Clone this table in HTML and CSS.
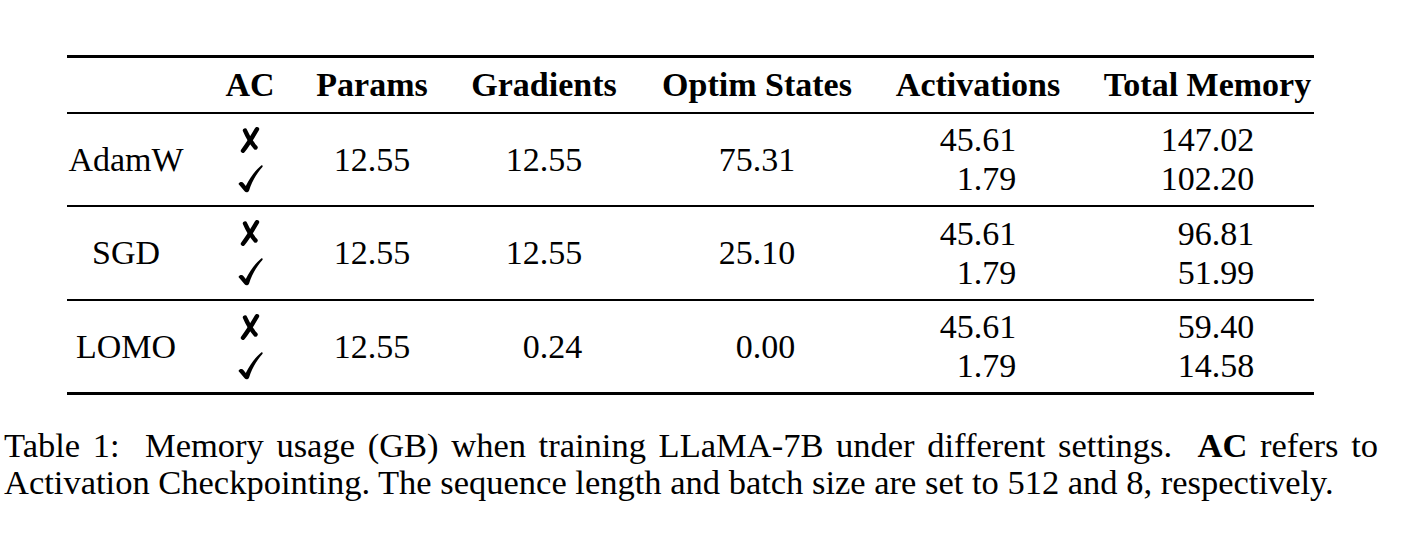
FILE: index.html
```html
<!DOCTYPE html>
<html lang="en">
<head>
<meta charset="utf-8">
<title>Table 1: Memory usage</title>
<link rel="stylesheet" href="styles.css">
</head>
<body>
<div class="page">
  <table class="mem">
    <colgroup>
      <col class="c1"><col class="c2"><col class="c3"><col class="c4"><col class="c5"><col class="c6"><col class="c7">
    </colgroup>
    <thead>
      <tr>
        <th></th><th>AC</th><th>Params</th><th>Gradients</th><th>Optim States</th><th>Activations</th><th>Total Memory</th>
      </tr>
    </thead>
    <tbody>
      <tr class="r1">
        <td>AdamW</td>
        <td><div class="stack marks">
          <svg class="xm" viewBox="0 0 22 26" width="22" height="26"><path d="M18 2.2 C14 9 9.5 16.5 4 23.8"/><path d="M6 3.5 C8.5 9.5 12 15.5 16.5 20.5"/></svg>
          <svg class="ck" viewBox="0 0 25 28" width="25" height="28"><path d="M0.5 19 C1.5 16.8 4.2 16.4 5.6 18.2 L7.8 21 C12 12.5 17 5.5 23.2 0.5 C24.3 -0.2 25.2 0.9 24.4 1.9 C18.5 8.5 14 16.5 11.2 25.2 C10.5 27.6 7.8 28 6.6 26.2 Z"/></svg>
        </div></td>
        <td><span class="n5">12.55</span></td>
        <td><span class="n5">12.55</span></td>
        <td><span class="n5">75.31</span></td>
        <td><div class="stack"><span>45.61</span><span>1.79</span></div></td>
        <td><div class="stack w6"><span>147.02</span><span>102.20</span></div></td>
      </tr>
      <tr>
        <td>SGD</td>
        <td><div class="stack marks">
          <svg class="xm" viewBox="0 0 22 26" width="22" height="26"><path d="M18 2.2 C14 9 9.5 16.5 4 23.8"/><path d="M6 3.5 C8.5 9.5 12 15.5 16.5 20.5"/></svg>
          <svg class="ck" viewBox="0 0 25 28" width="25" height="28"><path d="M0.5 19 C1.5 16.8 4.2 16.4 5.6 18.2 L7.8 21 C12 12.5 17 5.5 23.2 0.5 C24.3 -0.2 25.2 0.9 24.4 1.9 C18.5 8.5 14 16.5 11.2 25.2 C10.5 27.6 7.8 28 6.6 26.2 Z"/></svg>
        </div></td>
        <td><span class="n5">12.55</span></td>
        <td><span class="n5">12.55</span></td>
        <td><span class="n5">25.10</span></td>
        <td><div class="stack"><span>45.61</span><span>1.79</span></div></td>
        <td><div class="stack w6"><span>96.81</span><span>51.99</span></div></td>
      </tr>
      <tr>
        <td>LOMO</td>
        <td><div class="stack marks">
          <svg class="xm" viewBox="0 0 22 26" width="22" height="26"><path d="M18 2.2 C14 9 9.5 16.5 4 23.8"/><path d="M6 3.5 C8.5 9.5 12 15.5 16.5 20.5"/></svg>
          <svg class="ck" viewBox="0 0 25 28" width="25" height="28"><path d="M0.5 19 C1.5 16.8 4.2 16.4 5.6 18.2 L7.8 21 C12 12.5 17 5.5 23.2 0.5 C24.3 -0.2 25.2 0.9 24.4 1.9 C18.5 8.5 14 16.5 11.2 25.2 C10.5 27.6 7.8 28 6.6 26.2 Z"/></svg>
        </div></td>
        <td><span class="n5">12.55</span></td>
        <td><span class="n5">0.24</span></td>
        <td><span class="n5">0.00</span></td>
        <td><div class="stack"><span>45.61</span><span>1.79</span></div></td>
        <td><div class="stack w6"><span>59.40</span><span>14.58</span></div></td>
      </tr>
    </tbody>
  </table>
  <div class="caption">
    <p class="line1">Table 1:&nbsp; Memory usage (GB) when training LLaMA-7B under different settings.&nbsp; <b>AC</b> refers to</p>
    <p class="line2">Activation Checkpointing. The sequence length and batch size are set to 512 and 8, respectively.</p>
  </div>
</div>
</body>
</html>
```

FILE: styles.css
```css
html, body {
  margin: 0;
  padding: 0;
  background: #ffffff;
}

.page {
  width: 1403px;
  height: 538px;
  padding-top: 55px;
  box-sizing: border-box;
  font-family: "Liberation Serif", "Times New Roman", serif;
  color: #000000;
}

.mem {
  margin-left: 67px;
  width: 1247px;
  border-collapse: collapse;
  table-layout: fixed;
  font-size: 34px;
  line-height: 39px;
  border-top: 3px solid #000;
  border-bottom: 3px solid #000;
}

.c1 { width: 118px; }
.c2 { width: 130px; }
.c3 { width: 114px; }
.c4 { width: 230px; }
.c5 { width: 196px; }
.c6 { width: 246px; }
.c7 { width: 213px; }

.mem th,
.mem td {
  padding: 0;
  text-align: center;
  vertical-align: middle;
  white-space: nowrap;
}

.mem thead tr {
  height: 56px;
  border-bottom: 2px solid #000;
}

.mem th {
  font-weight: bold;
}

.mem tbody tr {
  height: 94px;
  border-bottom: 2px solid #000;
}

.mem tbody tr.r1 {
  height: 93px;
}

.mem tbody tr:last-child {
  border-bottom: 3px solid #000;
}

.stack {
  display: inline-grid;
  justify-items: end;
  vertical-align: middle;
}

.stack.w6 {
  min-width: 2.75em;
}

.n5 {
  display: inline-block;
  width: 2.25em;
  text-align: right;
}

.marks {
  justify-items: center;
  grid-auto-rows: 39px;
  align-items: center;
}

.marks svg {
  display: block;
}

.xm path {
  fill: none;
  stroke: #000;
  stroke-width: 4.4;
  stroke-linecap: round;
}

.ck path {
  fill: #000;
}

.caption {
  margin-top: 32px;
  margin-left: 4px;
  width: 1374px;
  font-size: 34.5px;
  line-height: 36.5px;
}

.caption p {
  margin: 0;
}

.line1 {
  text-align: justify;
  text-align-last: justify;
}

.line2 {
  text-align: left;
}
```
